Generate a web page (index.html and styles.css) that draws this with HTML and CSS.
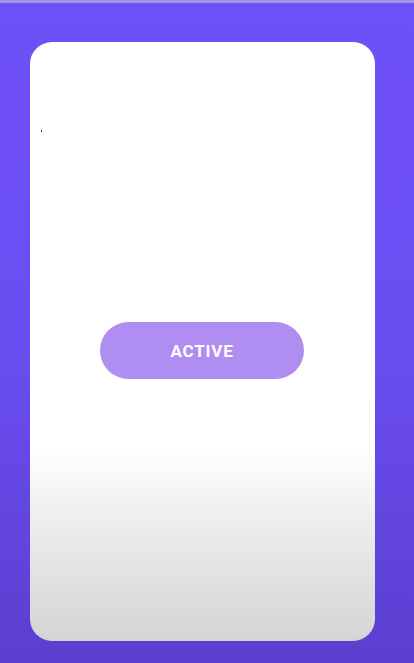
FILE: index.html
```html
<!DOCTYPE html>
<html>
<head>
<meta charset="utf-8">
<link rel="stylesheet" href="styles.css">
</head>
<body>
<div class="topbar"></div>
<div class="stage">
  <div class="card">
    <div class="dot"></div>
    <div class="center">
      <button class="btn">ACTIVE</button>
    </div>
  </div>
</div>
</body>
</html>
```
FILE: styles.css
```css
html, body {
  margin: 0;
  padding: 0;
  width: 414px;
  height: 663px;
  overflow: hidden;
}
body {
  background: linear-gradient(180deg, #6e50f7 0%, #6b4ef2 50%, #5b3fd0 100%);
  font-family: Roboto, "Liberation Sans", sans-serif;
}
.topbar {
  height: 3px;
  background: #a395e6;
}
.stage {
  padding: 39px 0 0 30px;
}
.card {
  width: 345px;
  height: 599px;
  border-radius: 22px;
  background: linear-gradient(180deg, #ffffff 0%, #ffffff 68%, #f0f0f0 78%, #d4d4d4 100%);
  display: flex;
  flex-direction: column;
  box-sizing: border-box;
  padding: 88px 0 0 11px;
}
.dot {
  width: 1px;
  height: 2px;
  background: #333;
}
.center {
  display: flex;
  justify-content: center;
  padding: 190px 12px 0 0;
}
.btn {
  width: 204px;
  height: 57px;
  border: none;
  border-radius: 29px;
  background: #b08df1;
  color: #fff;
  font-family: Roboto, "Liberation Sans", sans-serif;
  font-weight: 700;
  font-size: 17px;
  letter-spacing: 0.8px;
  padding: 0;
}
```
